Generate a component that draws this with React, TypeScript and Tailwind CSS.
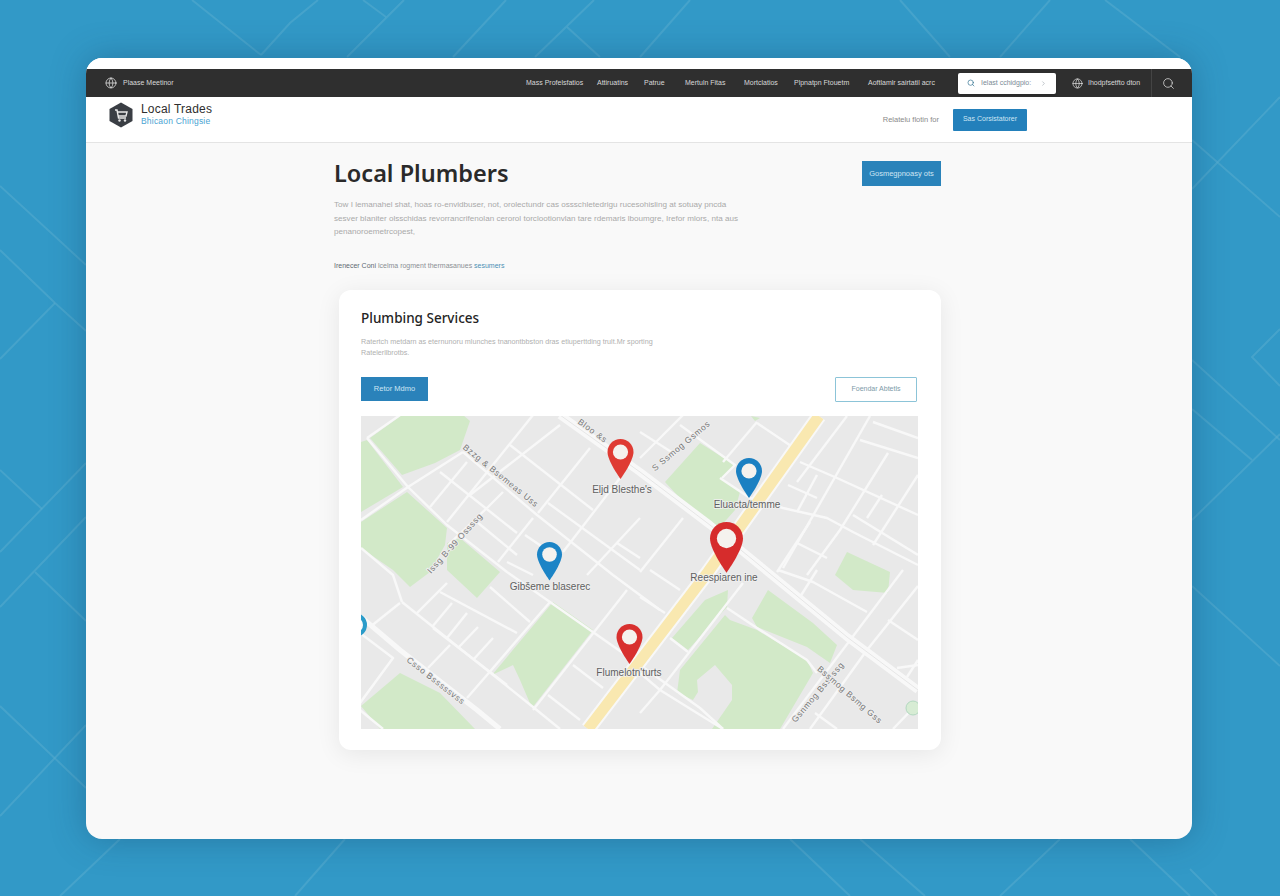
import React from 'react';
import { Globe, Search, ChevronRight } from 'lucide-react';

const navItems = [
  { label: 'Mass Profelsfatios', width: 'w-[55px]' },
  { label: 'Attiruatins', width: 'w-[31px]' },
  { label: 'Patrue', width: 'w-[25px]' },
  { label: 'Mertuln Fitas', width: 'w-[43px]' },
  { label: 'Mortclatios', width: 'w-[34px]' },
  { label: 'Plpnatpn Ftouetm', width: 'w-[58px]' },
  { label: 'Aoftlamlr sairtatil acrc', width: 'w-[75px]' },
];

const bgLines = [
  '192,0 261,55', '318,0 290,23 261,55', '363,0 386,17', '404,0 347,57', '506,0 453,57', '594,0 535,57', '567,27 600,57',
  '690,0 640,57', '900,0 950,57', '1000,57 1050,0', '1105,0 1180,57',
  '0,186 86,265', '0,250 55,303 86,331', '0,359 55,303', '0,470 42,509', '0,552 86,463', '0,607 86,517', '35,572 86,621',
  '0,706 86,788', '0,816 86,725',
  '1192,140 1280,217', '1192,189 1280,97', '1192,360 1280,440', '1192,409 1252,460', '1192,520 1280,434', '1280,329 1252,357 1280,386',
  '1192,586 1280,666', '1190,869 1217,896',
  '60,896 120,839', '295,896 345,839', '790,839 850,896', '860,839 925,896', '1000,896 1060,839', '1130,839 1190,896',
];

const parks = [
  '370,438 402,415 463,415 470,421 460,450 435,463 402,475',
  '361,442 367,440 403,487 361,512',
  '361,522 407,492 447,528 445,545 430,572 410,587 393,570 361,548',
  '447,543 460,538 500,572 477,598 447,570',
  '492,675 553,602 593,630 532,708 520,680 513,665',
  '361,706 400,673 440,693 475,729 380,729',
  '677,693 680,670 725,615 730,620 757,630 807,660 813,673 780,729 712,729 732,700 732,685 715,665 697,680 698,692 693,700',
  '768,590 813,623 837,645 830,663 807,647 757,627 752,618',
  '672,638 688,650 727,607 728,590 705,600',
  '835,575 847,552 890,572 888,593 853,590',
  '665,482 700,443 735,465 722,478 740,492 735,510 720,527 700,520',
  '751,416 760,418 755,421',
];

const streets = [
  '400,415 367,438', '367,438 408,487 447,525 507,572 550,602 640,665 700,708 723,729',
  '361,520 408,487 463,452', '463,452 537,515 613,575 660,610', '440,472 517,533', '467,462 430,507',
  '533,415 447,522', '560,425 470,495', '503,492 488,507 448,545', '510,445 593,510', '590,448 538,513', '548,503 640,570',
  '533,518 498,562', '477,522 517,555', '620,478 563,552', '640,518 587,575', '617,543 640,558', '525,535 550,552', '507,562 533,575',
  '361,548 393,575 402,602',
  '640,432 673,453', '680,425 735,465 722,478', '683,415 640,458', '757,422 723,462', '757,423 797,450',
  '683,518 640,572', '720,478 750,498 783,508 827,518 853,532 918,565', '870,416 783,568', '847,416 797,482',
  '800,462 837,478 918,515', '860,440 918,458', '873,422 918,438', '888,453 840,530 807,575', '918,475 873,545', '882,495 867,518',
  '788,485 817,498', '817,475 797,512', '853,515 918,555', '810,522 777,572', '797,543 827,558',
  '640,597 665,613', '650,570 680,590', '743,583 660,690 640,713', '670,638 688,652', '640,673 660,690 697,713 723,729',
  '727,608 757,628 807,660 817,673', '778,570 813,582 867,612', '817,570 800,597', '903,570 783,729', '918,586 867,650 810,729',
  '888,620 918,640', '897,668 918,665', '907,677 918,660', '815,713 837,729', '918,703 893,729',
  '447,583 417,613', '402,602 533,707 560,729', '440,592 517,633', '490,587 530,622', '452,603 432,627', '467,613 447,638',
  '478,627 458,648', '493,638 473,660', '433,628 507,685', '550,602 487,675 467,698', '450,645 428,668', '627,590 533,710',
  '573,665 603,688', '548,695 580,720', '360,633 393,658 360,703', '400,603 370,627', '360,710 383,729',
];

function Pin({ x, y, w, color }: { x: number; y: number; w: number; color: string }) {
  // x/y is the top centre of the pin, w its width
  const s = w / 26;
  return (
    <g transform={`translate(${x - w / 2} ${y}) scale(${s})`}>
      <path d="M13 0C5.8 0 0 5.8 0 13c0 9 13 27 13 27s13-18 13-27C26 5.8 20.2 0 13 0z" fill={color} />
      <circle cx="13" cy="13" r="7.6" fill="#f5f2ee" />
    </g>
  );
}

function MapLabel({ x, y, angle, children }: { x: number; y: number; angle: number; children: string }) {
  return (
    <text
      transform={`translate(${x} ${y}) rotate(${angle})`}
      textAnchor="middle"
      fontSize="8.5"
      fill="#777777"
      stroke="#eeeeee"
      strokeWidth="2"
      paintOrder="stroke"
      letterSpacing="0.7"
    >
      {children}
    </text>
  );
}

function PlaceLabel({ x, y, children }: { x: number; y: number; children: string }) {
  return (
    <text x={x} y={y} textAnchor="middle" fontSize="10" fill="#5f5f5f" stroke="#f0f0f0" strokeWidth="1.5" paintOrder="stroke">
      {children}
    </text>
  );
}

function MapView() {
  return (
    <svg viewBox="361 416 557 313" className="block h-[313px] w-[557px] bg-[#e9e9e9]">
      {parks.map((p) => (
        <polygon key={p} points={p} fill="#d2e9c8" />
      ))}
      <g fill="none" stroke="#f8f8f8" strokeWidth="2.4" strokeLinejoin="round">
        {streets.map((p) => (
          <polyline key={p} points={p} />
        ))}
      </g>
      <g fill="none" strokeLinejoin="round">
        <polyline points="361,617 400,650 477,710 500,729" stroke="#f8f8f8" strokeWidth="5" />
        <polyline points="560,415 640,472 710,525 747,555 847,637 918,690" stroke="#f8f8f8" strokeWidth="8" />
        <polyline points="560,415 640,472 710,525 747,555 847,637 918,690" stroke="#e6e6e6" strokeWidth="1" />
      </g>
      <polyline points="819,416 708,572 588,729" fill="none" stroke="#f8f8f8" strokeWidth="15" />
      <polyline points="819,416 708,572 588,729" fill="none" stroke="#f9e8b0" strokeWidth="11" />

      <MapLabel x={499} y={478} angle={39}>Bzzg & Bsemeas Uss</MapLabel>
      <MapLabel x={457} y={545} angle={-48}>Issg B-99 Ossssg</MapLabel>
      <MapLabel x={591} y={433} angle={36}>Bloo &s</MapLabel>
      <MapLabel x={683} y={448} angle={-40}>S Ssmog Gsmos</MapLabel>
      <MapLabel x={434} y={683} angle={38}>Csso Bsssssvss</MapLabel>
      <MapLabel x={820} y={694} angle={-50}>Gsnmog Bsssssg</MapLabel>
      <MapLabel x={848} y={697} angle={41}>Bssmog Bsmg Gss</MapLabel>

      <PlaceLabel x={622} y={493}>Eljd Blesthe's</PlaceLabel>
      <PlaceLabel x={747} y={508}>Eluacta/temme</PlaceLabel>
      <PlaceLabel x={724} y={581}>Reespiaren ine</PlaceLabel>
      <PlaceLabel x={550} y={590}>Gibšeme blaserec</PlaceLabel>
      <PlaceLabel x={629} y={676}>Flumelotn'turts</PlaceLabel>

      <Pin x={620.5} y={439} w={26} color="#df3b33" />
      <Pin x={749} y={458} w={26} color="#1b80c2" />
      <Pin x={726.5} y={522} w={33} color="#d62c2c" />
      <Pin x={549.5} y={542} w={25} color="#1b84c6" />
      <Pin x={629.5} y={624} w={26} color="#d8302e" />
      <circle cx="355" cy="625" r="10" fill="#fbfbfb" stroke="#2a9bc9" strokeWidth="4" />
      <circle cx="913" cy="708" r="7" fill="#d7ecd4" stroke="#b3d8c0" strokeWidth="1" />
    </svg>
  );
}

function Logo() {
  return (
    <svg viewBox="0 0 24 26" className="h-[26px] w-[24px] shrink-0">
      <path d="M12 0.5 23.5 7v12L12 25.5 0.5 19V7z" fill="#3a3e44" />
      <path d="M6 8h2l1.5 8h7.5M9 10h9l-1 4H9.5" fill="none" stroke="#e8e8e8" strokeWidth="1.4" />
      <circle cx="10.5" cy="18.5" r="1.2" fill="#e8e8e8" />
      <circle cx="16" cy="18.5" r="1.2" fill="#e8e8e8" />
    </svg>
  );
}

export default function App() {
  return (
    <div className="relative h-[896px] w-[1280px] overflow-hidden bg-[#3299c7] pl-[86px] pt-[58px] [font-family:'Liberation_Sans',sans-serif]">
      <svg viewBox="0 0 1280 896" className="absolute inset-0 h-full w-full">
        <g fill="none" stroke="#5aadd0" strokeOpacity="0.5" strokeWidth="2">
          {bgLines.map((p) => (
            <polyline key={p} points={p} />
          ))}
        </g>
      </svg>

      <div className="relative h-[781px] w-[1106px] overflow-hidden rounded-[16px] bg-[#f9f9f9] shadow-[0_0_34px_rgba(20,60,95,0.35)]">
        <div className="h-[11px] bg-white" />

        <div className="flex h-[28px] items-center bg-[#2f2f2f] pl-[19px] pr-[17px] text-[7px] text-[#d8d8d8]">
          <Globe className="h-[12px] w-[12px] text-[#e6e6e6]" strokeWidth={1.5} />
          <span className="ml-[6px] whitespace-nowrap">Plaase Meetinor</span>
          <nav className="ml-auto flex items-center gap-[16px]">
            {navItems.map((item) => (
              <span key={item.label} className={`${item.width} whitespace-nowrap`}>
                {item.label}
              </span>
            ))}
          </nav>
          <div className="ml-[15px] flex h-[21px] w-[98px] items-center rounded-[2px] bg-white pl-[9px] text-[#7b8b96] shadow-sm">
            <Search className="h-[8px] w-[8px] text-[#2d6f8f]" strokeWidth={2} />
            <span className="ml-[6px] w-[50px] whitespace-nowrap">Ielast cchidgpio:</span>
            <ChevronRight className="ml-[9px] h-[7px] w-[7px] text-[#9aa4aa]" />
          </div>
          <Globe className="ml-[16px] h-[11px] w-[11px] text-[#e6e6e6]" strokeWidth={1.5} />
          <span className="ml-[5px] w-[54px] whitespace-nowrap">Ihodpfsetfto dton</span>
          <div className="ml-[9px] h-[28px] w-px bg-[#444444]" />
          <Search className="ml-[10px] h-[13px] w-[13px] text-[#e0e0e0]" strokeWidth={1.4} />
        </div>

        <div className="flex h-[46px] items-center border-b border-[#e4e4e4] bg-white pl-[23px] pr-[165px]">
          <div className="mb-[9px] flex items-center">
            <Logo />
            <div className="ml-[8px] flex flex-col">
              <span className="text-[12px] font-medium leading-[13px] tracking-[0.2px] text-[#2e2e2e]">Local Trades</span>
              <span className="text-[8.5px] leading-[11px] tracking-[0.2px] text-[#4aa3d2]">Bhicaon Chingsie</span>
            </div>
          </div>
          <span className="ml-auto text-[7.5px] text-[#8a8a8a]">Relatelu flotin for</span>
          <div className="ml-[14px] flex h-[22px] w-[74px] items-center justify-center rounded-[1px] bg-[#2380bb] text-[7px] text-[#cfe6f4]">
            Sas Corsistatorer
          </div>
        </div>

        <div className="pl-[248px] pt-[18px]">
          <div className="flex w-[607px] items-center justify-between">
            <h1 className="text-[23.5px] font-semibold leading-[25px] text-[#2a2a2a] [font-family:'Noto_Sans',sans-serif]">Local Plumbers</h1>
            <div className="flex h-[25px] w-[79px] items-center justify-center bg-[#2a83ba] text-[7.5px] text-[#cfe6f4]">
              Gosmegpnoasy ots
            </div>
          </div>

          <p className="mt-[12px] whitespace-nowrap text-[8.1px] leading-[13.5px] text-[#a9a9a9]">
            Tow I lemanahel shat, hoas ro-envidbuser, not, orolectundr cas ossschletedrigu rucesohisling at sotuay pncda
            <br />
            sesver blaniter olsschidas revorrancrifenolan cerorol torclootionvlan tare rdemaris lboumgre, Irefor mlors, nta aus
            <br />
            penanoroemetrcopest,
          </p>
          <p className="mt-[21px] text-[7px] leading-[12px] text-[#8a8f94]">
            <span className="text-[#5f6a72]">Irenecer Coni</span> lcelma rogment thermasanues <span className="text-[#4a8fb5]">sesumers</span>
          </p>

          <div className="ml-[5px] mt-[18px] h-[460px] w-[602px] rounded-[12px] bg-white pl-[22px] pr-[23px] pt-[18px] shadow-[0_4px_24px_rgba(0,0,0,0.08)]">
            <h2 className="text-[13.5px] font-medium leading-[20px] text-[#242424] [font-family:'Noto_Sans',sans-serif]">Plumbing Services</h2>
            <p className="mt-[8px] w-[310px] text-[7.2px] leading-[11px] text-[#b0b0b0]">
              Ratertch metdarn as eternunoru mlunches tnanontbbston dras etiuperttding trult.Mr sporting
              Ratelerllbrotbs.
            </p>
            <div className="mt-[19px] flex h-[25px] items-center justify-between">
              <div className="flex h-[24px] w-[67px] items-center justify-center bg-[#2a82ba] text-[7.5px] text-[#cfe6f4]">Retor Mdmo</div>
              <div className="mr-px flex h-[25px] w-[82px] items-center justify-center rounded-[1px] border border-[#8cc4d8] bg-white text-[7px] text-[#7d9aa8]">
                Foendar Abtetls
              </div>
            </div>
            <div className="mt-[14px]">
              <MapView />
            </div>
          </div>
        </div>
      </div>
    </div>
  );
}
